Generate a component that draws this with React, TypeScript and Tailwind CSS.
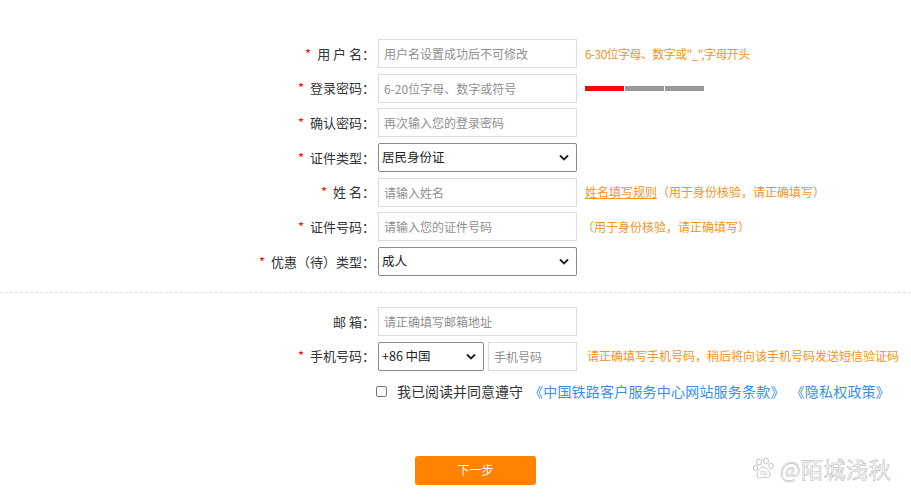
import React from 'react'

const font = { fontFamily: '"Microsoft YaHei", "Noto Sans CJK SC", "Noto Sans", sans-serif' }

function Label({ text, required = true }: { text: string; required?: boolean }) {
  return (
    <div className="w-[378px] shrink-0 pr-[3px] text-right text-[13px] text-[#333] whitespace-pre">
      {required && <span className="text-[#f00] mr-[6px]">*</span>}
      {text}
    </div>
  )
}

function TextInput({ placeholder, w = 'w-[199px]' }: { placeholder: string; w?: string }) {
  return (
    <input
      placeholder={placeholder}
      className={`${w} h-[29px] border border-[#dcdcdc] px-[5px] text-[12px] text-[#333] placeholder:text-[#8f8f8f] outline-none`}
    />
  )
}

function Chevron() {
  return (
    <svg width="10" height="7" viewBox="0 0 10 7" className="absolute right-[8px] top-[11px] pointer-events-none">
      <path d="M1 1.5 L5 5.5 L9 1.5" fill="none" stroke="#222" strokeWidth="1.8" />
    </svg>
  )
}

function Select({ value, w = 'w-[199px]' }: { value: string; w?: string }) {
  return (
    <div className={`relative ${w} h-[29px]`}>
      <div className="h-full border border-[#8a8a8a] rounded-[2px] pl-[3px] flex items-center text-[12.5px] text-[#222]">
        {value}
      </div>
      <Chevron />
    </div>
  )
}

function Row({ children }: { children: React.ReactNode }) {
  return <div className="flex items-center h-[29px]">{children}</div>
}

export default function App() {
  return (
    <div className="w-[911px] h-[500px] bg-white relative overflow-hidden" style={font}>
      <div className="pt-[39px] flex flex-col gap-[5.67px]">
        <Row>
          <Label text={'用 户 名：'} />
          <TextInput placeholder="用户名设置成功后不可修改" />
          <span className="ml-[8px] text-[12px] text-[#f39422] tracking-[-0.6px]">6-30位字母、数字或"_",字母开头</span>
        </Row>
        <Row>
          <Label text="登录密码：" />
          <TextInput placeholder="6-20位字母、数字或符号" />
          <div className="ml-[8px] flex gap-[1px]">
            <div className="w-[39px] h-[5px] bg-[#f00]" />
            <div className="w-[39px] h-[5px] bg-[#999]" />
            <div className="w-[39px] h-[5px] bg-[#999]" />
          </div>
        </Row>
        <Row>
          <Label text="确认密码：" />
          <TextInput placeholder="再次输入您的登录密码" />
        </Row>
        <Row>
          <Label text="证件类型：" />
          <Select value="居民身份证" />
        </Row>
        <Row>
          <Label text={'姓 名：'} />
          <TextInput placeholder="请输入姓名" />
          <span className="ml-[8px] text-[12px] text-[#f39422]">
            <span className="underline">姓名填写规则</span>（用于身份核验，请正确填写）
          </span>
        </Row>
        <Row>
          <Label text="证件号码：" />
          <TextInput placeholder="请输入您的证件号码" />
          <span className="ml-[5px] text-[12px] text-[#f39422]">（用于身份核验，请正确填写）</span>
        </Row>
        <Row>
          <Label text="优惠（待）类型：" />
          <Select value="成人" />
        </Row>
      </div>

      <div className="mt-[16px] border-t border-dashed border-[#e0e0e0]" />

      <div className="pt-[14px] flex flex-col gap-[5.67px]">
        <Row>
          <Label text={'邮 箱：'} required={false} />
          <TextInput placeholder="请正确填写邮箱地址" />
        </Row>
        <Row>
          <Label text="手机号码：" />
          <Select value="+86 中国" w="w-[106px]" />
          <div className="ml-[4px]">
            <TextInput placeholder="手机号码" w="w-[89px]" />
          </div>
          <span className="ml-[10px] text-[12px] text-[#f39422]">请正确填写手机号码，稍后将向该手机号码发送短信验证码</span>
        </Row>
      </div>

      <div className="mt-[14px] flex items-center pl-[376px] h-[14px]">
        <div className="w-[11px] h-[11px] border border-[#777] rounded-[2px]" />
        <span className="ml-[10px] text-[14px] text-[#333]">我已阅读并同意遵守</span>
        <span className="ml-[6px] text-[14px] text-[#3a8ee6] tracking-[0.2px]">《中国铁路客户服务中心网站服务条款》</span>
        <span className="ml-[6px] text-[14px] text-[#3a8ee6] tracking-[0.2px]">《隐私权政策》</span>
      </div>

      <div className="mt-[57px] pl-[415px]">
        <button className="w-[121px] h-[29px] bg-[#ff8200] rounded-[3px] text-white text-[12px]">下一步</button>
      </div>

      <div className="absolute right-[20px] bottom-[20px] flex items-center gap-[4px]">
        <svg width="24" height="24" viewBox="0 0 24 24">
          <g fill="none" stroke="#c4c4c4" strokeWidth="1">
            <ellipse cx="7" cy="6" rx="2.5" ry="3" />
            <ellipse cx="14" cy="5" rx="2.5" ry="3" />
            <ellipse cx="3.5" cy="12" rx="2.2" ry="2.8" />
            <ellipse cx="19" cy="10" rx="2.2" ry="2.8" />
            <path d="M5 20 C5 14 9 11 11 11 C14 11 18 15 18 19 C18 22 15 22 12 21 C9 22 5 23 5 20 Z" />
          </g>
          <text x="8" y="19" fontSize="6" fill="#c4c4c4">du</text>
        </svg>
        <span className="text-[22px] leading-none text-white [-webkit-text-stroke:0.6px_#bdbdbd] tracking-[0.5px]">@陌城浅秋</span>
      </div>
    </div>
  )
}
